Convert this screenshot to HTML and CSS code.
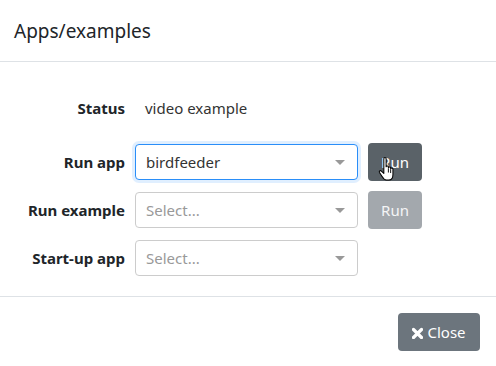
FILE: index.html
```html
<!DOCTYPE html>
<html>
<head>
<meta charset="utf-8">
<link rel="stylesheet" href="styles.css">
</head>
<body>
<div class="modal">
  <div class="modal-header">
    <h5 class="modal-title">Apps/examples</h5>
  </div>
  <div class="modal-body">
    <div class="row status-row">
      <div class="label">Status</div>
      <div class="value">video example</div>
    </div>
    <div class="row">
      <div class="label">Run app</div>
      <div class="select focused"><span class="sel-text">birdfeeder</span><span class="caret"></span></div>
      <div class="btn-wrap">
        <button class="btn btn-dark">Run</button>
        <svg class="cursor" width="18" height="24" viewBox="0 0 15.2 23.2"><path d="M5.5 1.5c0-1.3 2.2-1.3 2.2 0V9.5c0-1.2 2.2-1.2 2.2 0v1c0-1.2 2.2-1.2 2.2 0v1c0-1.2 2.2-1.2 2.2 0v5.5c0 3-1.6 5.3-4 5.3H8c-2 0-3-1.3-4.3-3.6L1.3 15c-.7-1.2.7-2.4 1.8-1.4l2.4 2.3z" fill="#fff" stroke="#000" stroke-width="1" stroke-linejoin="round"/><path d="M9.9 11v4M12.1 12v3.5" stroke="#000" stroke-width="0.9"/></svg>
      </div>
    </div>
    <div class="row">
      <div class="label">Run example</div>
      <div class="select"><span class="sel-text placeholder">Select...</span><span class="caret"></span></div>
      <div class="btn-wrap">
        <button class="btn btn-disabled">Run</button>
      </div>
    </div>
    <div class="row">
      <div class="label">Start-up app</div>
      <div class="select"><span class="sel-text placeholder">Select...</span><span class="caret"></span></div>
    </div>
  </div>
  <div class="modal-footer">
    <button class="btn btn-close"><svg class="x-icon" width="11" height="12" viewBox="0 0 11 12"><path d="M1.5 2.5l8 8M9.5 2.5l-8 8" stroke="#fff" stroke-width="3.2" stroke-linecap="round"/></svg>Close</button>
  </div>
</div>
</body>
</html>
```
FILE: styles.css
```css
* { box-sizing: border-box; }
html, body { margin: 0; padding: 0; background: #fff; }
body {
  font-family: "Noto Sans", "Open Sans", sans-serif;
  font-size: 15px;
  color: #212529;
  width: 496px;
  height: 366px;
  overflow: hidden;
}
.modal { width: 496px; }
.modal-header {
  height: 62px;
  border-bottom: 1px solid #dee2e6;
  padding: 0 14px;
  display: flex;
  align-items: center;
}
.modal-title {
  margin: 0;
  font-size: 19px;
  font-weight: 400;
  line-height: 30px;
  color: #212529;
}
.modal-body {
  padding: 27px 16px 19px 16px;
  display: flex;
  flex-direction: column;
  gap: 10px;
}
.row {
  display: flex;
  align-items: center;
  height: 38px;
  gap: 10px;
}
.status-row { margin-bottom: 6px; }
.label {
  width: 109px;
  text-align: right;
  font-weight: 700;
  color: #212529;
}
.value { color: #333; padding-left: 10px; }
.select {
  width: 223px;
  height: 36px;
  border: 1px solid #ccc;
  border-radius: 4px;
  display: flex;
  align-items: center;
  justify-content: space-between;
  padding: 0 12px 0 10px;
  background: #fff;
}
.select.focused {
  border-color: #2a8ef8;
  box-shadow: 0 0 0 3px rgba(0, 123, 255, 0.12);
}
.sel-text { color: #333; }
.sel-text.placeholder { color: #999; }
.caret {
  width: 0;
  height: 0;
  border-left: 5px solid transparent;
  border-right: 5px solid transparent;
  border-top: 5px solid #999;
}
.btn-wrap { position: relative; }
.btn {
  font-family: inherit;
  font-size: 15px;
  border: none;
  border-radius: 4px;
  color: #fff;
  height: 38px;
  padding: 0 12px;
  display: flex;
  align-items: center;
}
.btn-dark { background: #5a6268; width: 54px; justify-content: center; }
.btn-disabled { background: #a3a8ad; width: 54px; justify-content: center; color: #f4f5f6; }
.cursor { position: absolute; left: 9px; top: 14px; }
.modal-footer {
  border-top: 1px solid #dee2e6;
  padding: 16px;
  display: flex;
  justify-content: flex-end;
}
.btn-close {
  background: #6c757d;
  width: 82px;
  justify-content: center;
  gap: 4px;
}
.x-icon { margin-top: 1px; }
```
